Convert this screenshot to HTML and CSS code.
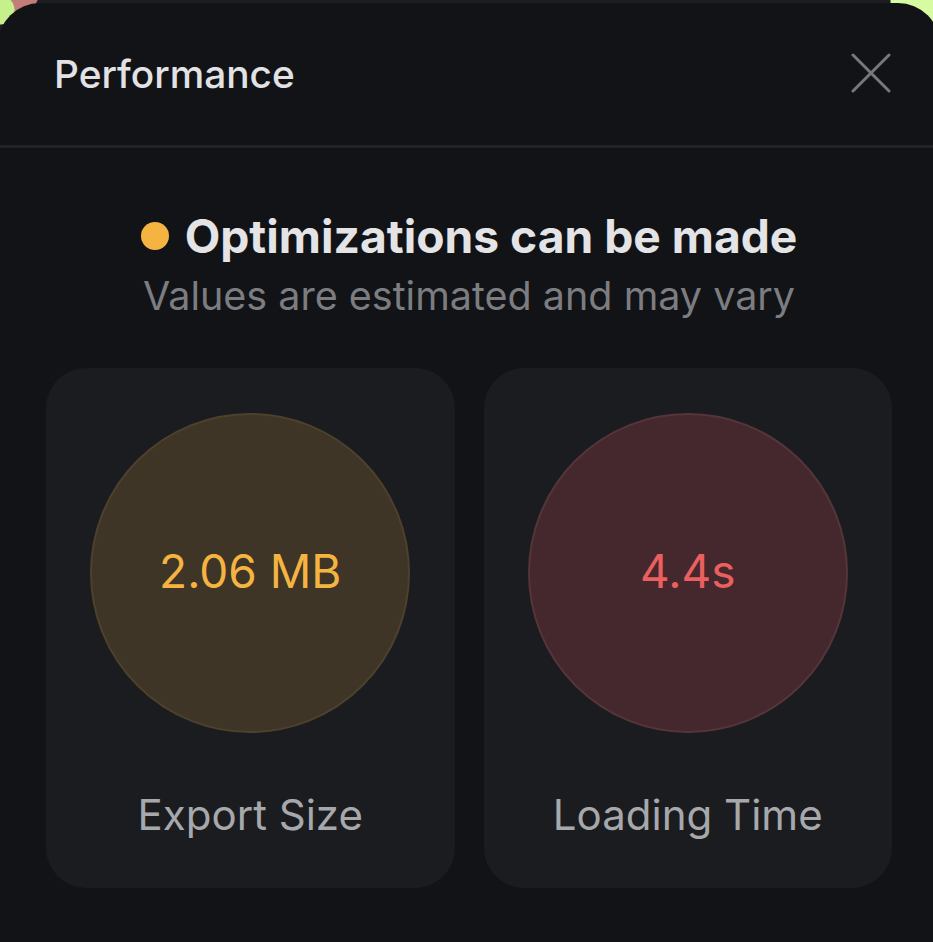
FILE: index.html
```html
<!DOCTYPE html>
<html lang="en">
<head>
<meta charset="utf-8">
<title>Performance</title>
<link rel="stylesheet" href="styles.css">
</head>
<body>
<div class="panel">
  <header class="panel-header">
    <h1 class="panel-title">Performance</h1>
    <button class="close" aria-label="Close">
      <svg width="40" height="40" viewBox="0 0 40 40"><path d="M2 2 L38 38 M38 2 L2 38" stroke="#77787c" stroke-width="3" stroke-linecap="round" fill="none"/></svg>
    </button>
  </header>
  <section class="summary">
    <p class="status"><span class="dot"></span>Optimizations can be made</p>
    <p class="note">Values are estimated and may vary</p>
  </section>
  <section class="metrics">
    <div class="card">
      <div class="ring ring-warn"><span>2.06 MB</span></div>
      <div class="label">Export Size</div>
    </div>
    <div class="card">
      <div class="ring ring-bad"><span>4.4s</span></div>
      <div class="label">Loading Time</div>
    </div>
  </section>
</div>
</body>
</html>
```

FILE: styles.css
```css
html, body {
  margin: 0;
  padding: 0;
  height: 100%;
  overflow: hidden;
}
body {
  background:
    radial-gradient(circle at 0px 10px, #c5f08c 0 14px, transparent 15px),
    radial-gradient(circle at 20px -6px, #c47c78 0 18px, transparent 19px),
    radial-gradient(circle at 933px 0px, #d6fba0 0 42px, transparent 43px),
    #1d1e23;
  font-family: Inter, "Noto Sans", sans-serif;
  display: flex;
  flex-direction: column;
}
.panel {
  flex: 1;
  margin: 3px -7px 0 -2px;
  background: #121317;
  border-radius: 42px 42px 0 0;
}
.panel-header {
  height: 145px;
  box-sizing: border-box;
  display: flex;
  align-items: center;
  justify-content: space-between;
  padding: 0 49px 2px 56px;
  border-bottom: 3px solid #222328;
}
.panel-title {
  margin: 0;
  font-size: 38.8px;
  font-weight: 500;
  color: #e2e2e4;
}
.close {
  background: none;
  border: 0;
  padding: 0;
  width: 40px;
  height: 40px;
  display: flex;
}
.summary {
  display: flex;
  flex-direction: column;
  align-items: center;
  padding-top: 60px;
}
.status {
  margin: 0;
  display: flex;
  align-items: center;
  gap: 16px;
  font-size: 46.2px;
  font-weight: 700;
  color: #e4e4e6;
  line-height: 56px;
}
.dot {
  width: 28px;
  height: 28px;
  border-radius: 50%;
  background: #f5b342;
}
.note {
  margin: 7px 0 0;
  font-size: 39.5px;
  color: #7c7d81;
  line-height: 50px;
}
.metrics {
  display: grid;
  grid-template-columns: 1fr 1fr;
  gap: 29px;
  padding: 47px 48px 0;
}
.card {
  background: #1b1c20;
  border-radius: 40px;
  display: flex;
  flex-direction: column;
  align-items: center;
  padding: 45px 0 40px;
  height: 520px;
  box-sizing: border-box;
}
.ring {
  width: 320px;
  height: 320px;
  box-sizing: border-box;
  border-radius: 50%;
  display: flex;
  align-items: center;
  justify-content: center;
  padding-bottom: 4px;
  font-size: 46px;
}
.ring-warn {
  background: #3e3526;
  border: 2px solid #4d412d;
  color: #f5b342;
}
.ring-bad {
  background: #44282d;
  border: 2px solid #553539;
  color: #ec5f5f;
}
.label {
  margin-top: 56px;
  font-size: 42px;
  color: #a7a8ab;
}
```
